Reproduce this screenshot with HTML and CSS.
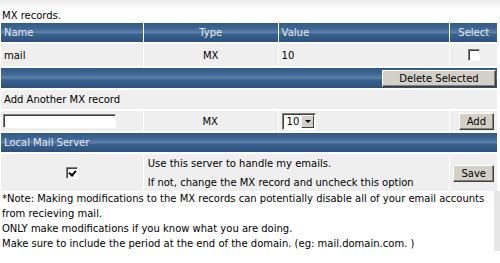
FILE: index.html
```html
<!DOCTYPE html>
<html lang="en">
<head>
    <meta charset="UTF-8">
    <title>MX records</title>
    <link rel="stylesheet" href="styles.css">
</head>
<body>
    <div class="page">
        <p class="caption">MX records.</p>

        <table class="mx">
            <tr class="head">
                <td class="c-name">Name</td>
                <td class="c-type center">Type</td>
                <td class="c-value">Value</td>
                <td class="c-select center">Select</td>
            </tr>
            <tr class="row rec">
                <td>mail</td>
                <td class="center">MX</td>
                <td>10</td>
                <td class="center"><span class="box"></span></td>
            </tr>
            <tr class="head bar">
                <td colspan="4" class="right"><span class="btn btn-del">Delete Selected</span></td>
            </tr>
            <tr class="row sub">
                <td colspan="4">Add Another MX record</td>
            </tr>
            <tr class="row add">
                <td><span class="field"></span></td>
                <td class="center">MX</td>
                <td><span class="pick"><span class="pick-val">10</span><span class="pick-arrow"></span></span></td>
                <td class="right"><span class="btn">Add</span></td>
            </tr>
            <tr class="head">
                <td colspan="4">Local Mail Server</td>
            </tr>
            <tr class="row local">
                <td class="center"><span class="box checked"></span></td>
                <td colspan="2" class="text">Use this server to handle my emails.<br>If not, change the MX record and uncheck this option</td>
                <td class="center"><span class="btn">Save</span></td>
            </tr>
        </table>

        <div class="note">
            *Note: Making modifications to the MX records can potentially disable all of your email accounts from recieving mail.<br>
            ONLY make modifications if you know what you are doing.<br>
            Make sure to include the period at the end of the domain. (eg: mail.domain.com. )
        </div>
    </div>
</body>
</html>
```

FILE: styles.css
```css
body {
    margin: 0;
    font-family: 'DejaVu Sans', Verdana, sans-serif;
    font-size: 10px;
    color: #000;
    background: #fff;
}
.page {
    background: linear-gradient(#ececec, #fff 10px);
}
.caption {
    margin: 0;
    padding: 9px 0 0 2px;
    line-height: 14px;
}
.mx {
    width: 498px;
    border-collapse: separate;
    border-spacing: 1px 2px;
    margin-top: -2px;
}
.mx td {
    padding: 0 3px;
    white-space: nowrap;
}
.c-name { width: 136px; }
.c-type { width: 128px; }
.c-value { width: 165px; }
.center { text-align: center; }
.right { text-align: right; }
.head td {
    height: 19px;
    color: #e4e8ee;
    background: linear-gradient(#325a87, #3f6792 30%, #5c82ab 50%, #3a628e 60%, #2b507c);
}
.bar td {
    height: 20px;
    padding-right: 1px;
}
.row td {
    background: #efefef;
}
.rec td { height: 22px; }
.sub td { height: 19px; }
.add td { height: 20px; padding-left: 2px; }
.local td { height: 38px; }
.local .text {
    line-height: 19px;
    padding-left: 4px;
}
.btn {
    display: inline-block;
    padding: 0 7px;
    height: 15px;
    line-height: 15px;
    color: #000;
    background: #d4d0c8;
    border: 1px solid;
    border-color: #fff #404040 #404040 #fff;
    box-shadow: inset -1px -1px 0 #808080;
}
.btn-del {
    width: 98px;
    text-align: center;
}
.box {
    display: inline-block;
    width: 10px;
    height: 10px;
    background: #fff;
    border: 1px solid;
    border-color: #808080 #fff #fff #808080;
    box-shadow: inset 1px 1px 0 #404040;
    vertical-align: middle;
    position: relative;
}
.box.checked::after {
    content: '';
    position: absolute;
    left: 3px;
    top: 1px;
    width: 3px;
    height: 5px;
    border: solid #000;
    border-width: 0 2px 2px 0;
    transform: rotate(40deg);
}
.field {
    display: inline-block;
    width: 111px;
    height: 12px;
    background: #fff;
    border: 1px solid;
    border-color: #808080 #fff #fff #808080;
    box-shadow: inset 1px 1px 0 #404040;
    vertical-align: middle;
}
.pick {
    display: inline-flex;
    align-items: center;
    height: 15px;
    background: #fff;
    border: 1px solid;
    border-color: #808080 #fff #fff #808080;
    box-shadow: inset 1px 1px 0 #404040;
    vertical-align: middle;
    margin-left: 1px;
}
.pick-val {
    padding: 0 2px 0 4px;
}
.pick-arrow {
    width: 13px;
    height: 13px;
    margin-right: 1px;
    background: #d4d0c8;
    border: 1px solid;
    border-color: #fff #404040 #404040 #fff;
    box-sizing: border-box;
    position: relative;
}
.pick-arrow::after {
    content: '';
    position: absolute;
    left: 3px;
    top: 4px;
    border: 3px solid transparent;
    border-top: 3px solid #000;
}
.note {
    padding: 0 8px 0 2px;
    line-height: 15px;
    background: #fff;
    border-right: 6px solid #e6e6e6;
    margin-top: -3px;
}
```
